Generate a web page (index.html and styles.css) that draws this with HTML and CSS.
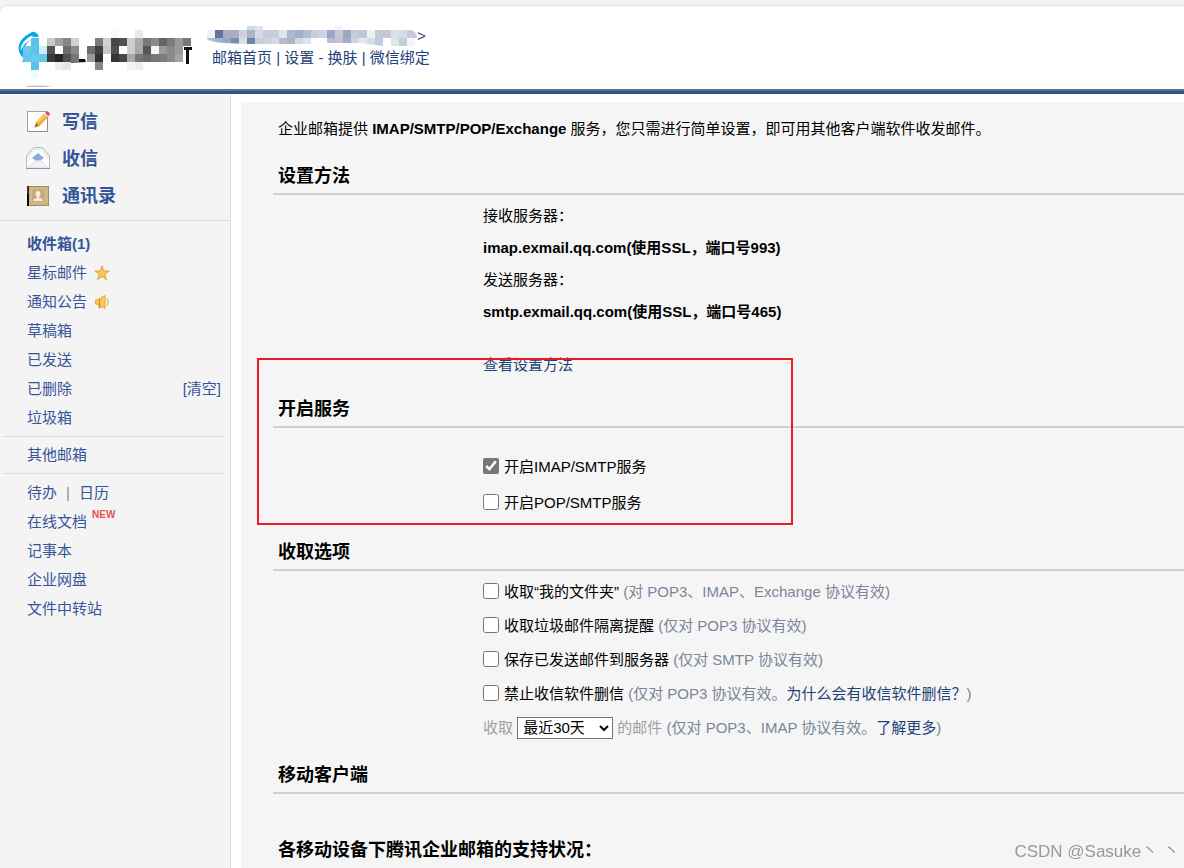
FILE: index.html
```html
<!DOCTYPE html>
<html lang="zh-CN">
<head>
    <meta charset="UTF-8">
    <title>企业邮箱 - 客户端设置</title>
    <link rel="stylesheet" href="styles.css">
</head>
<body>
    <header class="header">
        <svg class="logo" width="178" height="60" viewBox="17 28 178 60" aria-label="logo">
            <path d="M32 32C22 37 17 44 19 51C20 56 24 59 30 60C23 54 22 45 31 40L39 36C37 33 34 31 32 32Z" fill="#08a9e1"/>
            <path d="M31 36C24 40 20 45 21 51C22 46 26 40 38 38Z" fill="#fff"/>
            <path d="M21 61C24 60 27 60 32 61V62H23Z" fill="#5cc5ea"/>
            <path d="M67 61L75 59L85 59L86 62L67 63Z" fill="#111"/>
            <path d="M87 58L91 57V61L88 62Z" fill="#111"/>
            <path d="M25 86Q38 85 53 86L46 87H28Z" fill="#b4bfd6"/>
            <g id="logo-blocks"></g>
            <path d="M184 47H192V50H189V64H186V50H184Z" fill="#111"/>
        </svg>
        <div class="account">
            <div class="account-mail">
                <svg width="210" height="22" viewBox="207 26 210 22" aria-hidden="true">
                    <defs>
                        <clipPath id="mail-clip">
                            <path d="M207 30H247V26H263V30H335V26H343V30H411Q417 32 417 38V46H382L375 45L359 43H327V44H247L225 43Q210 42 207 39Z"/>
                        </clipPath>
                    </defs>
                    <g id="mail-blocks" clip-path="url(#mail-clip)"></g>
                </svg><span>&gt;</span>
            </div>
            <nav class="account-links">
                <a href="#">邮箱首页</a> | <a href="#">设置</a> - <a href="#">换肤</a> | <a href="#">微信绑定</a>
            </nav>
        </div>
    </header>

    <div class="page">
        <aside class="sidebar">
            <nav class="actions">
                <a href="#">
                    <svg width="24" height="24" viewBox="0 0 24 24">
                        <rect x="1.5" y="1.5" width="20" height="20" fill="#fdfdfd" stroke="#a3a5a8"/>
                        <path d="M2 21.5H21.5V4" fill="none" stroke="#8c9095"/>
                        <path d="M9 17L10.500 12.500L18 4L21.500 7L13.500 15.500Z" fill="#f6b12a" stroke="#cf8a1c" stroke-width=".7"/>
                        <path d="M12 12L19 5" stroke="#ffe27a" stroke-width="1.2"/>
                        <path d="M8.500 17.500L10 13.500L12.500 15.500Z" fill="#8b6c43"/>
                        <path d="M17.500 4.500L19 3L22.500 6L21 7.500Z" fill="#d9d9d9"/>
                        <path d="M19 3L20.500 1.500Q24 2 24 4.500L22.500 6Z" fill="#e2504b"/>
                    </svg>
                    写信
                </a>
                <a href="#">
                    <svg width="24" height="24" viewBox="0 0 24 24">
                        <path d="M.5 9L6 2Q7 .5 9 .5H15Q17 .5 18 2L23.500 9V21H.5Z" fill="#eef0f3" stroke="#b6babf"/>
                        <path d="M3 11L7 4Q8 2.500 12 2.500T17 4L21 11L12 18Z" fill="#fbfcfd" stroke="#dfe2e6" stroke-width=".6"/>
                        <path d="M6 11L12 6L18 11L12 15Z" fill="#8eabd8"/>
                        <path d="M1 10L9 15L1 21ZM23 10L15 15L23 21Z" fill="#fcfdfd"/>
                        <path d="M1 21L9 14.500Q12 12.500 15 14.500L23 21Z" fill="#f0f3f6" stroke="#d1d7de" stroke-width=".7"/>
                        <path d="M0 21.500H24" stroke="#8d949d"/>
                    </svg>
                    收信
                </a>
                <a href="#">
                    <svg width="24" height="24" viewBox="0 0 24 24">
                        <rect x="1" y="2" width="22" height="20" fill="#a58c62"/>
                        <rect x="3" y="3" width="19" height="18" fill="#cdb487"/>
                        <rect x="1" y="2" width="2" height="20" fill="#3a3024"/>
                        <rect x="1" y="10" width="2" height="12" fill="#0c0a07"/>
                        <rect x="5.500" y="4.500" width="14" height="14" fill="#c4aa7c" stroke="#d6c093"/>
                        <ellipse cx="12" cy="10" rx="2.500" ry="3" fill="#f3ebdb"/>
                        <path d="M7 17Q7 14.500 11 14V12H13V14Q17 14.500 17 17Z" fill="#f3ebdb"/>
                    </svg>
                    通讯录
                </a>
            </nav>
            <ul class="folders">
                <li><a href="#"><b>收件箱(1)</b></a></li>
                <li>
                    <a href="#">星标邮件</a>
                    <svg class="mark" width="16" height="16" viewBox="0 0 16 16"><path d="M8 .8L9.800 6H15.200L10.900 9.300L12.500 14.700L8 11.500L3.500 14.700L5.100 9.300L.8 6H6.200Z" fill="#f7c948" stroke="#d59a3c" stroke-width=".8"/></svg>
                </li>
                <li>
                    <a href="#">通知公告</a>
                    <svg class="mark" width="16" height="16" viewBox="0 0 16 16"><path d="M1.500 6L5 5L11 1.500V14.500L7 12V14H5V11L1.500 10Z" fill="#f8cb4b" stroke="#dc9c40" stroke-width=".8"/><path d="M5.500 5V13" stroke="#c9822d"/><path d="M13 4Q15.500 8 13 12" fill="none" stroke="#e0a34a"/></svg>
                </li>
                <li><a href="#">草稿箱</a></li>
                <li><a href="#">已发送</a></li>
                <li><a href="#">已删除</a><a class="clear" href="#">[清空]</a></li>
                <li><a href="#">垃圾箱</a></li>
            </ul>
            <ul class="folders others">
                <li><a href="#">其他邮箱</a></li>
            </ul>
            <ul class="folders tools">
                <li><a href="#">待办</a><span class="bar">|</span><a href="#">日历</a></li>
                <li><a href="#">在线文档</a><span class="new">NEW</span></li>
                <li><a href="#">记事本</a></li>
                <li><a href="#">企业网盘</a></li>
                <li><a href="#">文件中转站</a></li>
            </ul>
        </aside>

        <main class="content">
            <p class="intro">企业邮箱提供 <b>IMAP/SMTP/POP/Exchange</b> 服务，您只需进行简单设置，即可用其他客户端软件收发邮件。</p>

            <section>
                <h2>设置方法</h2>
                <div class="method">
                    <p>接收服务器：</p>
                    <p><b>imap.exmail.qq.com(使用SSL，端口号993)</b></p>
                    <p>发送服务器：</p>
                    <p><b>smtp.exmail.qq.com(使用SSL，端口号465)</b></p>
                    <p class="more"><a href="#">查看设置方法</a></p>
                </div>
            </section>

            <section class="service">
                <h2>开启服务</h2>
                <div class="switches">
                    <label><input type="checkbox" checked>开启IMAP/SMTP服务</label>
                    <label><input type="checkbox">开启POP/SMTP服务</label>
                </div>
                <div class="highlight"></div>
            </section>

            <section>
                <h2>收取选项</h2>
                <div class="options">
                    <div><input type="checkbox" id="folder"><label for="folder">收取“我的文件夹”</label> <span class="tip">(对 POP3、IMAP、Exchange 协议有效)</span></div>
                    <div><input type="checkbox" id="spam"><label for="spam">收取垃圾邮件隔离提醒</label> <span class="tip">(仅对 POP3 协议有效)</span></div>
                    <div><input type="checkbox" id="sent"><label for="sent">保存已发送邮件到服务器</label> <span class="tip">(仅对 SMTP 协议有效)</span></div>
                    <div><input type="checkbox" id="nodel"><label for="nodel">禁止收信软件删信</label> <span class="tip">(仅对 POP3 协议有效。<a href="#">为什么会有收信软件删信？</a>)</span></div>
                    <div class="range">
                        <label for="days">收取</label>
                        <select id="days">
                            <option>最近30天</option>
                            <option>全部</option>
                        </select>
                        的邮件 <span class="tip">(仅对 POP3、IMAP 协议有效。<a href="#">了解更多</a>)</span>
                    </div>
                </div>
            </section>

            <section>
                <h2>移动客户端</h2>
                <h3>各移动设备下腾讯企业邮箱的支持状况：</h3>
            </section>
        </main>
    </div>
    <div class="watermark">CSDN @Sasuke丶 丶</div>

    <script>
        // each row: y, height, then one colour per 8px block ("" = empty)
        function drawBlocks(id, startX, rows) {
            var group = document.getElementById(id);
            rows.forEach(function (row) {
                row[2].split(",").forEach(function (color, i) {
                    if (!color) return;
                    var rect = document.createElementNS("http://www.w3.org/2000/svg", "rect");
                    rect.setAttribute("x", startX + i * 8);
                    rect.setAttribute("y", row[0]);
                    rect.setAttribute("width", 8);
                    rect.setAttribute("height", row[1]);
                    rect.setAttribute("fill", "#" + color);
                    group.appendChild(rect);
                });
            });
        }

        drawBlocks("logo-blocks", 23, [
            [30, 8, ",,,,,,,,,,,fafafa,,,e9e9e9,,,,,,"],
            [38, 8, ",58c2e8,,c9c9c9,a1a1a1,858585,d1d1d1,,,7c7c7c,d0d0d0,464646,525252,cdcdcd,a9a9a9,797979,8a8a8a,646464,7b7b7b,999,777"],
            [46, 8, "6cc9eb,5cc3e8,cdeef8,535353,fff,6b6b6b,888,,6c6c6c,424242,c9c9c9,505050,fff,cdcdcd,a9a9a9,565656,f5f5f5,999,8b8b8b,999,"],
            [54, 8, "62c6ea,6ccbed,68c8ea,3a3a3a,2b2829,515151,777,,999,313131,,353535,464646,a9a9a9,777,6b6b6b,777,7c7c7c,8b8b8b,a5a5a5,"],
            [62, 8, ",5bc3e8,,,eee,e4e4e4,,,,858585,,,,f3f3f3,ededed,,,,,,"],
            [70, 8, ",f0f9fc,,,,,,,,,,,,,,,,,,,"]
        ]);
        drawBlocks("mail-blocks", 207, [
            [26, 4, ",,,,,d0dce0,dae6e9,,,,,,,,,,f5f5f5"],
            [30, 8, "f0f0f3,64749b,a8adc0,a8b0c4,ccd3d6,aab4c8,d3dae6,c7cdd8,c8ced9,dde5ee,afb8cb,9bb0cf,b4bed0,c7cedb,cfd5e0,9ba8c4,c8c8d3,9ba8c4,c0cbdb,bcc8d8,ecf1f4,bfcbd9,c4c6d3,dadfe6,d6dde6,c8cbd6,c8cbd6"],
            [38, 8, "b3bacb,9bb4d1,93abcb,7a8bae,d8dde6,6d84ad,c8cbd8,ccd1da,d3dae6,b8bccb,a8b4c8,cfdae3,d8e6ef,,,b3c0d8,c8c0cf,9bb0cf,c8d5e1,e8e8e8,d5dde8,c0cbdb,,dae5ed,c4ced9,f3f5f7,"]
        ]);
    </script>
</body>
</html>
```
FILE: styles.css
```css
* {
    box-sizing: border-box;
}
body {
    margin: 0;
    min-height: 100vh;
    display: flex;
    flex-direction: column;
    padding-top: 5px;
    background-color: #f3f3f3;
    color: #000;
    font-family: "Liberation Sans", "Noto Sans CJK SC", sans-serif;
    font-size: 15px;
    line-height: 22px;
}
p, h2, h3, ul {
    margin: 0;
    padding: 0;
}
ul {
    list-style: none;
}
a {
    color: #1e4377;
    text-decoration: none;
}
a:hover {
    text-decoration: underline;
}

/* Header */
.header {
    display: flex;
    gap: 12px;
    height: 84px;
    padding: 20px 17px 0;
    background-color: #fff;
    border-top: 1px solid #e4e4e4;
    border-top-left-radius: 8px;
}
.logo {
    margin-top: 2px;
}
.account {
    color: #1e4377;
}
.account-mail {
    display: flex;
    height: 21px;
    line-height: 20px;
}
.account-links {
    padding-left: 5px;
}

/* Page columns */
.page {
    flex: 1;
    display: flex;
    border-top: 3px solid #29568a;
    box-shadow: 0 -2px #60708c;
    margin-top: 2px;
    background-color: #fff;
}
.sidebar {
    flex: none;
    width: 231px;
    background-color: #f4f4f4;
    border-right: 1px solid #ddd;
}
.sidebar a {
    color: #36549a;
}
.actions {
    padding: 9px 0 6px 26px;
    border-bottom: 1px solid #ddd;
}
.actions a {
    display: flex;
    align-items: center;
    gap: 12px;
    height: 37px;
    font-size: 18px;
    font-weight: bold;
}
.folders {
    margin: 0 6px 0 2px;
    padding: 8px 0 4px 25px;
}
.folders li {
    display: flex;
    align-items: center;
    height: 29px;
}
.mark {
    margin-left: 7px;
}
.clear {
    margin-left: auto;
    margin-right: 3px;
}
.others {
    padding: 3px 0 4px 25px;
    border-top: 1px solid #ddd;
    border-bottom: 1px solid #ddd;
}
.tools {
    padding-top: 4px;
}
.bar {
    margin: 0 9px;
    color: #7b8fb8;
}
.new {
    align-self: flex-start;
    margin-left: 5px;
    color: #e6534c;
    font-size: 10px;
    font-weight: bold;
    line-height: 16px;
}

/* Settings */
.content {
    flex: 1;
    min-width: 0;
    margin: 8px 0 0 10px;
    padding-left: 32px;
    background-color: #f5f5f5;
}
.intro {
    padding: 16px 0 19px 5px;
}
h2, h3 {
    padding-left: 5px;
    font-size: 18px;
    line-height: 34px;
}
h2 {
    border-bottom: 2px solid #c8cfdd;
}
h3 {
    padding-top: 39px;
}
.method, .switches, .options {
    padding-left: 210px;
}
.method {
    padding-top: 5px;
    padding-bottom: 11px;
    line-height: 32px;
}
.more {
    padding-top: 21px;
}
.switches {
    padding-top: 21px;
    padding-bottom: 14px;
}
.switches label, .options div {
    display: block;
    white-space: nowrap;
}
.switches label {
    line-height: 36px;
}
.options {
    padding-top: 4px;
    padding-bottom: 13px;
    line-height: 34px;
}
input[type="checkbox"] {
    width: 16px;
    height: 16px;
    margin: 0 5px 0 0;
    vertical-align: -2px;
    accent-color: #767676;
}
.tip {
    color: #798699;
}
.range {
    color: #a0a0a0;
}
select {
    width: 96px;
    height: 22px;
    padding: 0 1px;
    border: 1px solid #767676;
    border-radius: 0;
    background-color: #fff;
    color: #000;
    font-family: inherit;
    font-size: 15px;
}

/* Red frame around the service switches */
.service {
    position: relative;
}
.highlight {
    position: absolute;
    top: -34px;
    left: -16px;
    width: 536px;
    height: 167px;
    border: 2px solid #ed1c24;
    pointer-events: none;
}

.watermark {
    position: fixed;
    right: 4px;
    bottom: 5px;
    color: #999;
    font-size: 17px;
}
```
